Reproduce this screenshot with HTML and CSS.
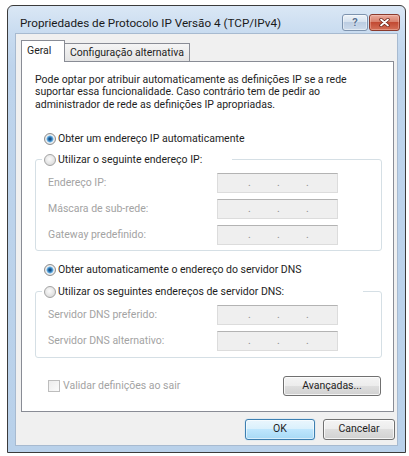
FILE: index.html
```html
<!DOCTYPE html>
<html lang="pt">
<head>
<meta charset="utf-8">
<title>Propriedades de Protocolo IP Versão 4 (TCP/IPv4)</title>
<link rel="stylesheet" href="styles.css">
</head>
<body>
<div class="window">
  <div class="titlebar">
    <span class="title">Propriedades de Protocolo IP Versão 4 (TCP/IPv4)</span>
    <div class="caption-buttons">
      <span class="cap-btn help">?</span>
      <span class="cap-btn close">
        <svg width="11" height="9" viewBox="0 0 11 9">
          <path d="M2 1.5 L9 7.5 M9 1.5 L2 7.5" stroke="#6a2217" stroke-width="3.4" stroke-linecap="round" fill="none"/>
          <path d="M2 1.5 L9 7.5 M9 1.5 L2 7.5" stroke="#ffffff" stroke-width="1.8" stroke-linecap="round" fill="none"/>
        </svg>
      </span>
    </div>
  </div>
  <div class="client">
    <div class="tabs">
      <div class="tab selected">Geral</div>
      <div class="tab other">Configuração alternativa</div>
    </div>
    <div class="panel">
      <p class="intro">Pode optar por atribuir automaticamente as definições IP se a rede<br>suportar essa funcionalidade. Caso contrário tem de pedir ao<br>administrador de rede as definições IP apropriadas.</p>

      <div class="radio-row first"><span class="radio checked"></span>Obter um endereço IP automaticamente</div>
      <fieldset class="group ip">
        <legend class="legend legend-ip"><span class="radio-row in-legend"><span class="radio"></span>Utilizar o seguinte endereço IP:</span></legend>
        <div class="field"><span class="label">Endereço IP:</span><span class="ipbox"><i>.</i><i>.</i><i>.</i></span></div>
        <div class="field"><span class="label">Máscara de sub-rede:</span><span class="ipbox"><i>.</i><i>.</i><i>.</i></span></div>
        <div class="field"><span class="label">Gateway predefinido:</span><span class="ipbox"><i>.</i><i>.</i><i>.</i></span></div>
      </fieldset>

      <div class="radio-row dns-first"><span class="radio checked"></span>Obter automaticamente o endereço do servidor DNS</div>
      <fieldset class="group dns">
        <legend class="legend legend-dns"><span class="radio-row in-legend"><span class="radio"></span>Utilizar os seguintes endereços de servidor DNS:</span></legend>
        <div class="field"><span class="label">Servidor DNS preferido:</span><span class="ipbox"><i>.</i><i>.</i><i>.</i></span></div>
        <div class="field"><span class="label">Servidor DNS alternativo:</span><span class="ipbox"><i>.</i><i>.</i><i>.</i></span></div>
      </fieldset>

      <div class="bottom-row">
        <span class="check-row"><span class="checkbox"></span>Validar definições ao sair</span>
        <span class="btn advanced">Avançadas...</span>
      </div>
    </div>
    <div class="footer">
      <span class="btn default ok">OK</span>
      <span class="btn cancel">Cancelar</span>
    </div>
  </div>
</div>
</body>
</html>
```

FILE: styles.css
```css
* {
  box-sizing: border-box;
}

html,
body {
  margin: 0;
  padding: 0;
  background: #ffffff;
}

body {
  font-family: Roboto, "Open Sans", sans-serif;
  font-size: 10.5px;
  color: #1e1e1e;
}

.window {
  margin: 5px 0 0 7px;
  width: 399px;
  border: 1px solid #3b3b3b;
  border-radius: 6px 6px 0 0;
  background: linear-gradient(to bottom, #dae7f5 0, #c9dcf0 26px, #bed4ec 60px, #b9d1ea 100%);
}

.titlebar {
  height: 27px;
  display: flex;
  justify-content: space-between;
  align-items: flex-start;
  padding: 8px 5px 0 12px;
}

.title {
  font-size: 11.7px;
  line-height: 16px;
  margin-top: 1px;
  color: #1a1a1a;
}

.caption-buttons {
  display: flex;
  gap: 1px;
}

.cap-btn {
  height: 17px;
  border-radius: 3px;
  display: flex;
  align-items: center;
  justify-content: center;
}

.help {
  width: 26px;
  border: 1px solid #7d93ae;
  background: linear-gradient(to bottom, #eef3f9 0%, #d6e2ef 45%, #bccde2 50%, #cddbeb 100%);
  box-shadow: inset 0 0 0 1px rgba(255, 255, 255, 0.45);
  font-weight: 700;
  font-size: 11px;
  line-height: 15px;
  color: #587292;
  text-shadow: 0 0 2px #ffffff;
}

.close {
  width: 31px;
  border: 1px solid #8a3a2d;
  background: linear-gradient(to bottom, #eaaa9c 0%, #d8806c 45%, #c24a33 50%, #d46f57 100%);
  box-shadow: inset 0 0 0 1px rgba(255, 220, 210, 0.35);
}

.client {
  margin: 0 7px 6px 7px;
  border: 1px solid #a7bad0;
  background: #f0f0f0;
  padding: 6px 3px 5px 5px;
}

/* Tabs */
.tabs {
  display: flex;
  align-items: flex-end;
  height: 21px;
}

.tab {
  border: 1px solid #898c95;
  border-bottom: none;
  line-height: 14px;
  white-space: nowrap;
}

.tab.selected {
  width: 44px;
  height: 22px;
  margin-bottom: -1px;
  padding: 3px 0 0 5px;
  background: #ffffff;
  position: relative;
  z-index: 1;
}

.tab.other {
  width: 126px;
  height: 18px;
  margin-left: -1px;
  padding: 2px 0 0 5px;
  background: linear-gradient(to bottom, #f5f5f5, #e4e4e4);
}

/* Panel */
.panel {
  background: #ffffff;
  border: 1px solid #898c95;
  padding: 12px 11px 15px 13px;
}

.intro {
  margin: 0;
  line-height: 12.3px;
  white-space: nowrap;
}

.radio-row {
  display: flex;
  align-items: center;
  height: 14px;
  line-height: 14px;
  padding-left: 9px;
  white-space: nowrap;
}

.radio-row.first {
  margin-top: 21px;
}

.radio-row.dns-first {
  margin-top: 12px;
}

.radio-row.in-legend {
  padding-left: 2px;
}

.radio {
  flex: none;
  width: 12px;
  height: 12px;
  margin-right: 2px;
  border-radius: 50%;
  border: 1px solid #a3a3a3;
  background: radial-gradient(circle at 45% 40%, #fbfbfb 0, #e9e9e9 45%, #cfcfcf 100%);
}

.radio.checked {
  border-color: #8f8f8f;
  background: radial-gradient(circle at 50% 50%, #123f6e 0, #25639c 1.4px, #4f9bd4 2.6px, #9fd0f1 3.4px, #f3f3f3 3.9px, #e1e1e1 5px, #cbcbcb 6px);
}

/* Group boxes */
.group {
  margin: 7px 0 0 0;
  padding: 6px 0 5px 6px;
  border: 1px solid #d5dfe5;
  border-radius: 3px;
  min-width: 0;
}

.group.dns {
  margin-top: 8px;
  padding-bottom: 6px;
}

.legend {
  padding: 0;
  height: 14px;
}

.legend-ip {
  width: 190px;
}

.legend-dns {
  width: 321px;
}

.field {
  display: flex;
  align-items: center;
  height: 20px;
  padding-left: 6px;
}

.field + .field {
  margin-top: 6px;
}

.label {
  width: 169px;
  color: #a3a3a3;
  white-space: nowrap;
}

.ipbox {
  display: flex;
  width: 121px;
  height: 20px;
  padding-left: 30px;
  border: 1px solid #dcdcdc;
  border-top-color: #b3b3b3;
  background: #efefef;
  line-height: 17px;
  color: #8e8e8e;
}

.ipbox i {
  font-style: normal;
  width: 29px;
}

/* Bottom row */
.bottom-row {
  display: flex;
  justify-content: space-between;
  align-items: center;
  margin-top: 18px;
  padding-left: 13px;
  padding-right: 1px;
}

.check-row {
  display: flex;
  align-items: center;
  color: #a3a3a3;
  white-space: nowrap;
}

.checkbox {
  width: 12px;
  height: 12px;
  margin-right: 3px;
  border: 1px solid #bdbdbd;
  background: linear-gradient(135deg, #ececec, #fbfbfb);
}

.btn {
  height: 20px;
  border: 1px solid #707070;
  border-radius: 3px;
  background: linear-gradient(to bottom, #f4f4f4 0%, #ececec 50%, #dedede 50%, #d1d1d1 100%);
  box-shadow: inset 0 0 0 1px rgba(255, 255, 255, 0.75);
  display: flex;
  align-items: center;
  justify-content: center;
  line-height: 14px;
  color: #1e1e1e;
  white-space: nowrap;
}

.advanced {
  width: 98px;
}

.footer {
  display: flex;
  justify-content: flex-end;
  gap: 8px;
  margin: 7px -1px 0 0;
}

.footer .btn {
  height: 21px;
}

.ok {
  width: 70px;
}

.cancel {
  width: 72px;
}

.btn.default {
  border-color: #3c7fb1;
  background: linear-gradient(to bottom, #eaf6fd 0%, #d9f0fc 50%, #bee6fd 50%, #a7d9f5 100%);
  box-shadow: inset 0 0 0 1px rgba(255, 255, 255, 0.55), 0 0 1px #6cb7e8;
}
```
